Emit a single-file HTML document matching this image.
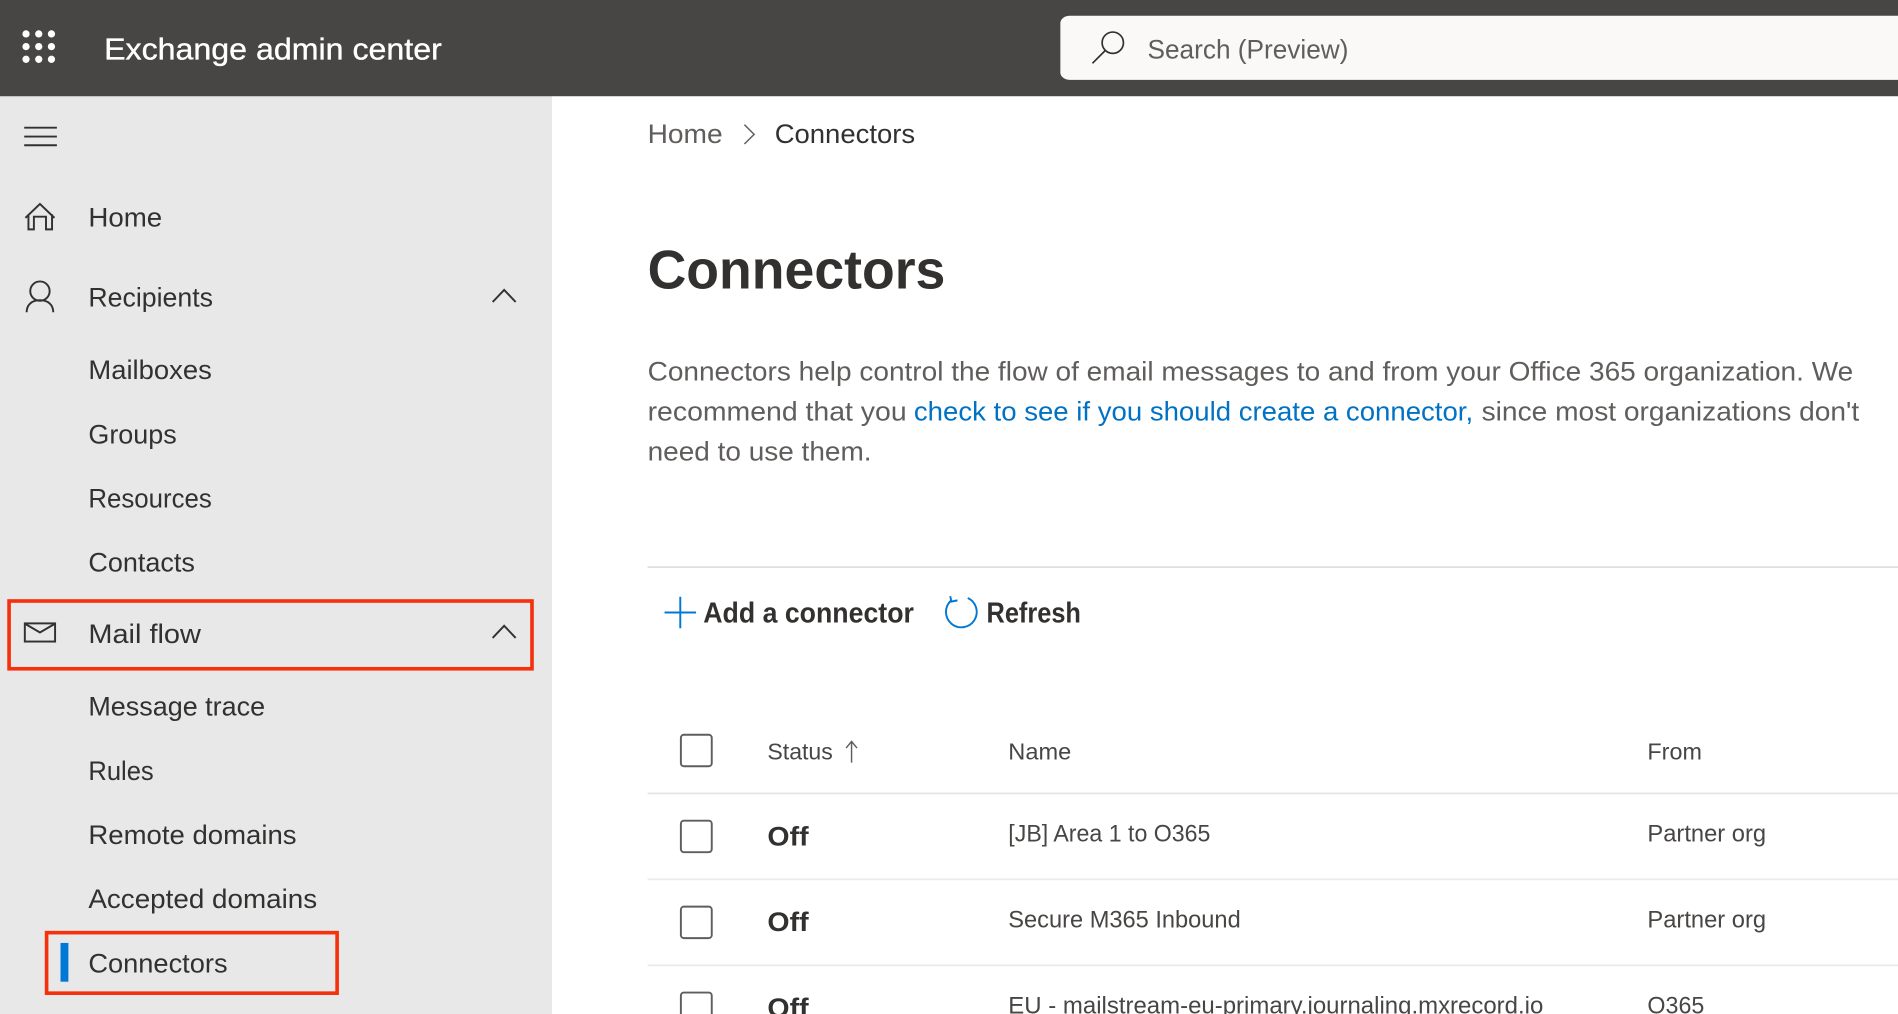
<!DOCTYPE html>
<html lang="en">
<head>
<meta charset="utf-8">
<title>Exchange admin center - Connectors</title>
<style>
html,body{margin:0;padding:0;width:1898px;height:1014px;overflow:hidden;background:#fff}
svg{display:block;position:absolute;left:0;top:0}
text{font-family:"Liberation Sans",sans-serif;white-space:pre;transform:translateY(-0.7px)}
.nav{font-size:22.5px;fill:#323130}
.para{font-size:22.5px;fill:#605e5c}
.th{font-size:19px;fill:#484644}
.td{font-size:19.5px;fill:#484644}
.off{font-size:22.5px;font-weight:700;fill:#323130}
.cmd{font-size:24px;font-weight:700;fill:#323130}
.ic{fill:none;stroke:#323130;stroke-width:1.6}
.cb{fill:#fff;stroke:#605e5c;stroke-width:1.6}
.ln{stroke:#edebe9;stroke-width:1.5}
</style>
</head>
<body>
<svg width="1898" height="1014" viewBox="0 0 1568 837.7" preserveAspectRatio="none" xmlns="http://www.w3.org/2000/svg">
<rect width="1568" height="838" fill="#fff"/>
<!-- sidebar -->
<rect x="0" y="79" width="456" height="759" fill="#e8e8e8"/>
<!-- top bar -->
<rect width="1568" height="79.5" fill="#484644"/>
<g fill="#fff">
<circle cx="21.5" cy="28" r="3"/><circle cx="32" cy="28" r="3"/><circle cx="42.5" cy="28" r="3"/>
<circle cx="21.5" cy="38.5" r="3"/><circle cx="32" cy="38.5" r="3"/><circle cx="42.5" cy="38.5" r="3"/>
<circle cx="21.5" cy="49" r="3"/><circle cx="32" cy="49" r="3"/><circle cx="42.5" cy="49" r="3"/>
</g>
<text x="86" y="50" font-size="25.5" fill="#fff" stroke="#fff" stroke-width="0.3" textLength="279" lengthAdjust="spacingAndGlyphs">Exchange admin center</text>
<path d="M884 13H1568V66H884a8 6 0 0 1-8-6V19a8 6 0 0 1 8-6z" fill="#faf9f8"/>
<circle cx="919.3" cy="35.3" r="8.8" fill="none" stroke="#323130" stroke-width="1.4"/>
<path d="M913 41.8 902.5 52.3" fill="none" stroke="#323130" stroke-width="1.4"/>
<text x="948" y="49" font-size="22.5" fill="#605e5c" textLength="166" lengthAdjust="spacingAndGlyphs">Search (Preview)</text>

<!-- hamburger -->
<path class="ic" d="M20 105.5H47M20 112.8H47M20 120H47"/>
<!-- home -->
<path class="ic" d="M21 180 33 168.5 45 180M23.5 177V189.5H28V179H38V189.5H43V177"/>
<text class="nav" x="73" y="188" textLength="61" lengthAdjust="spacingAndGlyphs">Home</text>
<!-- person -->
<circle class="ic" cx="33" cy="240.500" r="8"/>
<path class="ic" d="M22 258c0-6 4-10 11-10s11 4 11 10"/>
<text class="nav" x="73" y="254" textLength="103" lengthAdjust="spacingAndGlyphs">Recipients</text>
<path class="ic" d="M407 249.500 416.500 239.500 426 249.500"/>
<text class="nav" x="73" y="314" textLength="102" lengthAdjust="spacingAndGlyphs">Mailboxes</text>
<text class="nav" x="73" y="367" textLength="73" lengthAdjust="spacingAndGlyphs">Groups</text>
<text class="nav" x="73" y="420" textLength="102" lengthAdjust="spacingAndGlyphs">Resources</text>
<text class="nav" x="73" y="473" textLength="88" lengthAdjust="spacingAndGlyphs">Contacts</text>
<!-- mail -->
<rect class="ic" x="20.500" y="515" width="25" height="15"/>
<path class="ic" d="M21 515.500 33 522.500 45 515.500"/>
<text class="nav" x="73" y="532" textLength="93" lengthAdjust="spacingAndGlyphs">Mail flow</text>
<path class="ic" d="M407 527 416.500 517 426 527"/>
<text class="nav" x="73" y="592" textLength="146" lengthAdjust="spacingAndGlyphs">Message trace</text>
<text class="nav" x="73" y="645" textLength="54" lengthAdjust="spacingAndGlyphs">Rules</text>
<text class="nav" x="73" y="698" textLength="172" lengthAdjust="spacingAndGlyphs">Remote domains</text>
<text class="nav" x="73" y="751" textLength="189" lengthAdjust="spacingAndGlyphs">Accepted domains</text>
<rect x="50" y="779" width="6.500" height="32" fill="#0078d4"/>
<text class="nav" x="73" y="804" textLength="115" lengthAdjust="spacingAndGlyphs">Connectors</text>
<!-- annotation boxes -->
<rect x="7.500" y="496.500" width="432" height="56" fill="none" stroke="#f5310d" stroke-width="3"/>
<rect x="38.500" y="770.500" width="240" height="50" fill="none" stroke="#f5310d" stroke-width="3"/>

<!-- breadcrumb -->
<text x="535" y="119" font-size="22.5" fill="#605e5c" textLength="62" lengthAdjust="spacingAndGlyphs">Home</text>
<path d="M615 103 623 111 615 119" fill="none" stroke="#605e5c" stroke-width="1.200"/>
<text x="640" y="119" font-size="22.5" fill="#323130" textLength="116" lengthAdjust="spacingAndGlyphs">Connectors</text>
<!-- title -->
<text x="535" y="239" font-size="45" font-weight="700" fill="#323130" textLength="246" lengthAdjust="spacingAndGlyphs">Connectors</text>
<!-- description -->
<text class="para" x="535" y="315" textLength="996" lengthAdjust="spacingAndGlyphs">Connectors help control the flow of email messages to and from your Office 365 organization. We</text>
<text class="para" x="535" y="348" textLength="214" lengthAdjust="spacingAndGlyphs">recommend that you</text>
<text x="755" y="348" font-size="22.5" fill="#0072c6" textLength="462" lengthAdjust="spacingAndGlyphs">check to see if you should create a connector,</text>
<text class="para" x="1224" y="348" textLength="312" lengthAdjust="spacingAndGlyphs">since most organizations don't</text>
<text class="para" x="535" y="381" textLength="185" lengthAdjust="spacingAndGlyphs">need to use them.</text>

<line x1="535" y1="468.500" x2="1568" y2="468.500" stroke="#e1dfdd" stroke-width="1.500"/>
<!-- commands -->
<path d="M562 493V519M549 506H575" fill="none" stroke="#0078d4" stroke-width="1.600"/>
<text class="cmd" x="581" y="515" textLength="174" lengthAdjust="spacingAndGlyphs">Add a connector</text>
<path d="M799.500 494A12.700 12.700 0 1 1 785.500 496.300" fill="none" stroke="#0078d4" stroke-width="1.600"/>
<path d="M785 492.500 786 497 791 496" fill="none" stroke="#0078d4" stroke-width="1.600"/>
<text class="cmd" x="815" y="515" textLength="78" lengthAdjust="spacingAndGlyphs">Refresh</text>

<!-- table -->
<rect class="cb" x="562.500" y="607" width="25.500" height="26" rx="2.500"/>
<text class="th" x="634" y="628" textLength="54" lengthAdjust="spacingAndGlyphs">Status</text>
<path d="M703.500 630V613M699 618 703.500 612.500 708 618" fill="none" stroke="#605e5c" stroke-width="1.200"/>
<text class="th" x="833" y="628" textLength="52" lengthAdjust="spacingAndGlyphs">Name</text>
<text class="th" x="1361" y="628" textLength="45" lengthAdjust="spacingAndGlyphs">From</text>
<line class="ln" x1="535" y1="655.500" x2="1568" y2="655.500" style="stroke:#e8e6e4"/>

<rect class="cb" x="562.500" y="678" width="25.500" height="26" rx="2.500"/>
<text class="off" x="634" y="699" textLength="34" lengthAdjust="spacingAndGlyphs">Off</text>
<text class="td" x="833" y="696" textLength="167" lengthAdjust="spacingAndGlyphs">[JB] Area 1 to O365</text>
<text class="td" x="1361" y="696" textLength="98" lengthAdjust="spacingAndGlyphs">Partner org</text>
<line class="ln" x1="535" y1="726.500" x2="1568" y2="726.500"/>

<rect class="cb" x="562.500" y="749" width="25.500" height="26" rx="2.500"/>
<text class="off" x="634" y="770" textLength="34" lengthAdjust="spacingAndGlyphs">Off</text>
<text class="td" x="833" y="767" textLength="192" lengthAdjust="spacingAndGlyphs">Secure M365 Inbound</text>
<text class="td" x="1361" y="767" textLength="98" lengthAdjust="spacingAndGlyphs">Partner org</text>
<line class="ln" x1="535" y1="797.500" x2="1568" y2="797.500"/>

<rect class="cb" x="562.500" y="820" width="25.500" height="26" rx="2.500"/>
<text class="off" x="634" y="841" textLength="34" lengthAdjust="spacingAndGlyphs">Off</text>
<text class="td" x="833" y="838" textLength="442" lengthAdjust="spacingAndGlyphs">EU - mailstream-eu-primary.journaling.mxrecord.io</text>
<text class="td" x="1361" y="838" textLength="47" lengthAdjust="spacingAndGlyphs">O365</text>
</svg>
</body>
</html>
